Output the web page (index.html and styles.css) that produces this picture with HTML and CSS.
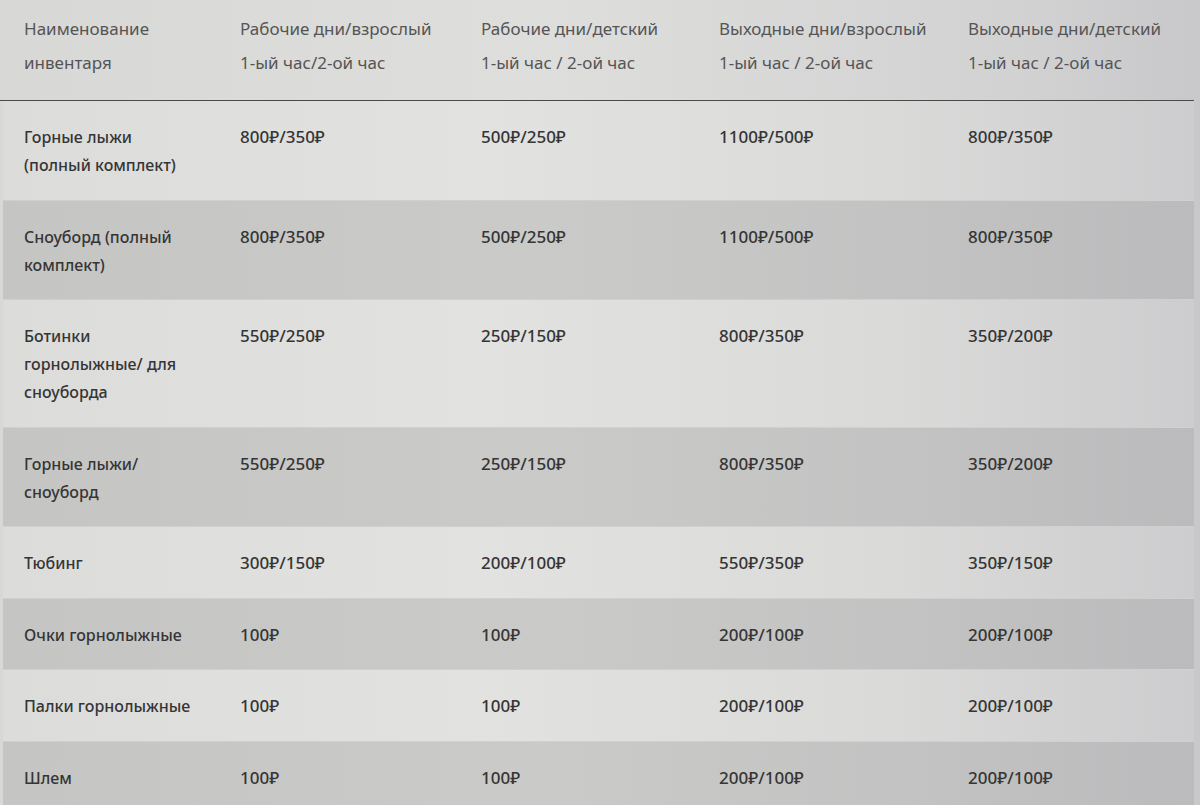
FILE: index.html
```html
<!DOCTYPE html>
<html lang="ru">
<head>
<meta charset="utf-8">
<title>Прокат инвентаря</title>
<link rel="stylesheet" href="styles.css">
</head>
<body>
<div class="page">
  <div class="price-table">
    <div class="row head">
      <div class="cell">Наименование<br>инвентаря</div>
      <div class="cell">Рабочие дни/взрослый<br>1-ый час/2-ой час</div>
      <div class="cell">Рабочие дни/детский<br>1-ый час / 2-ой час</div>
      <div class="cell">Выходные дни/взрослый<br>1-ый час / 2-ой час</div>
      <div class="cell">Выходные дни/детский<br>1-ый час / 2-ой час</div>
    </div>
    <div class="row light">
      <div class="cell name">Горные лыжи<br>(полный комплект)</div>
      <div class="cell price">800₽/350₽</div>
      <div class="cell price">500₽/250₽</div>
      <div class="cell price">1100₽/500₽</div>
      <div class="cell price">800₽/350₽</div>
    </div>
    <div class="row dark">
      <div class="cell name">Сноуборд (полный<br>комплект)</div>
      <div class="cell price">800₽/350₽</div>
      <div class="cell price">500₽/250₽</div>
      <div class="cell price">1100₽/500₽</div>
      <div class="cell price">800₽/350₽</div>
    </div>
    <div class="row light">
      <div class="cell name">Ботинки<br>горнолыжные/ для<br>сноуборда</div>
      <div class="cell price">550₽/250₽</div>
      <div class="cell price">250₽/150₽</div>
      <div class="cell price">800₽/350₽</div>
      <div class="cell price">350₽/200₽</div>
    </div>
    <div class="row dark">
      <div class="cell name">Горные лыжи/<br>сноуборд</div>
      <div class="cell price">550₽/250₽</div>
      <div class="cell price">250₽/150₽</div>
      <div class="cell price">800₽/350₽</div>
      <div class="cell price">350₽/200₽</div>
    </div>
    <div class="row light">
      <div class="cell name">Тюбинг</div>
      <div class="cell price">300₽/150₽</div>
      <div class="cell price">200₽/100₽</div>
      <div class="cell price">550₽/350₽</div>
      <div class="cell price">350₽/150₽</div>
    </div>
    <div class="row dark">
      <div class="cell name">Очки горнолыжные</div>
      <div class="cell price">100₽</div>
      <div class="cell price">100₽</div>
      <div class="cell price">200₽/100₽</div>
      <div class="cell price">200₽/100₽</div>
    </div>
    <div class="row light">
      <div class="cell name">Палки горнолыжные</div>
      <div class="cell price">100₽</div>
      <div class="cell price">100₽</div>
      <div class="cell price">200₽/100₽</div>
      <div class="cell price">200₽/100₽</div>
    </div>
    <div class="row dark">
      <div class="cell name">Шлем</div>
      <div class="cell price">100₽</div>
      <div class="cell price">100₽</div>
      <div class="cell price">200₽/100₽</div>
      <div class="cell price">200₽/100₽</div>
    </div>
  </div>
</div>
</body>
</html>
```

FILE: styles.css
```css
html, body {
  margin: 0;
  padding: 0;
  height: 100%;
  overflow: hidden;
}
body {
  background: linear-gradient(90deg, #d8d8d6 0%, #dededc 45%, #d2d2d3 85%, #c8c8ca 100%);
  font-family: "Noto Sans", "Liberation Sans", sans-serif;
}
.page {
  padding: 0 6px 0 3px;
}
.price-table {
  display: flex;
  flex-direction: column;
}
.row {
  display: grid;
  grid-template-columns: 216px 241px 238px 249px 1fr;
}
.cell {
  padding-left: 21px;
}
.head {
  padding: 12px 0 20px 3px;
  margin-left: -3px;
  line-height: 34px;
  font-size: 17px;
  color: #555555;
  font-weight: 400;
  border-bottom: 1.5px solid #4a4a4a;
}
.light, .dark {
  padding: 22px 0 20.5px;
  line-height: 28px;
  font-weight: 500;
  color: #353535;
  border-bottom: 1px solid #d0d0ce;
}
.name {
  font-size: 16px;
}
.price {
  font-size: 17px;
}
.light {
  background: linear-gradient(90deg, #dcdcda 0%, #e2e2e0 40%, #dadad9 75%, #cdcdcf 100%);
}
.dark {
  background: linear-gradient(90deg, #c5c5c4 0%, #cacac8 45%, #c3c3c3 75%, #bbbbbd 100%);
}
```
